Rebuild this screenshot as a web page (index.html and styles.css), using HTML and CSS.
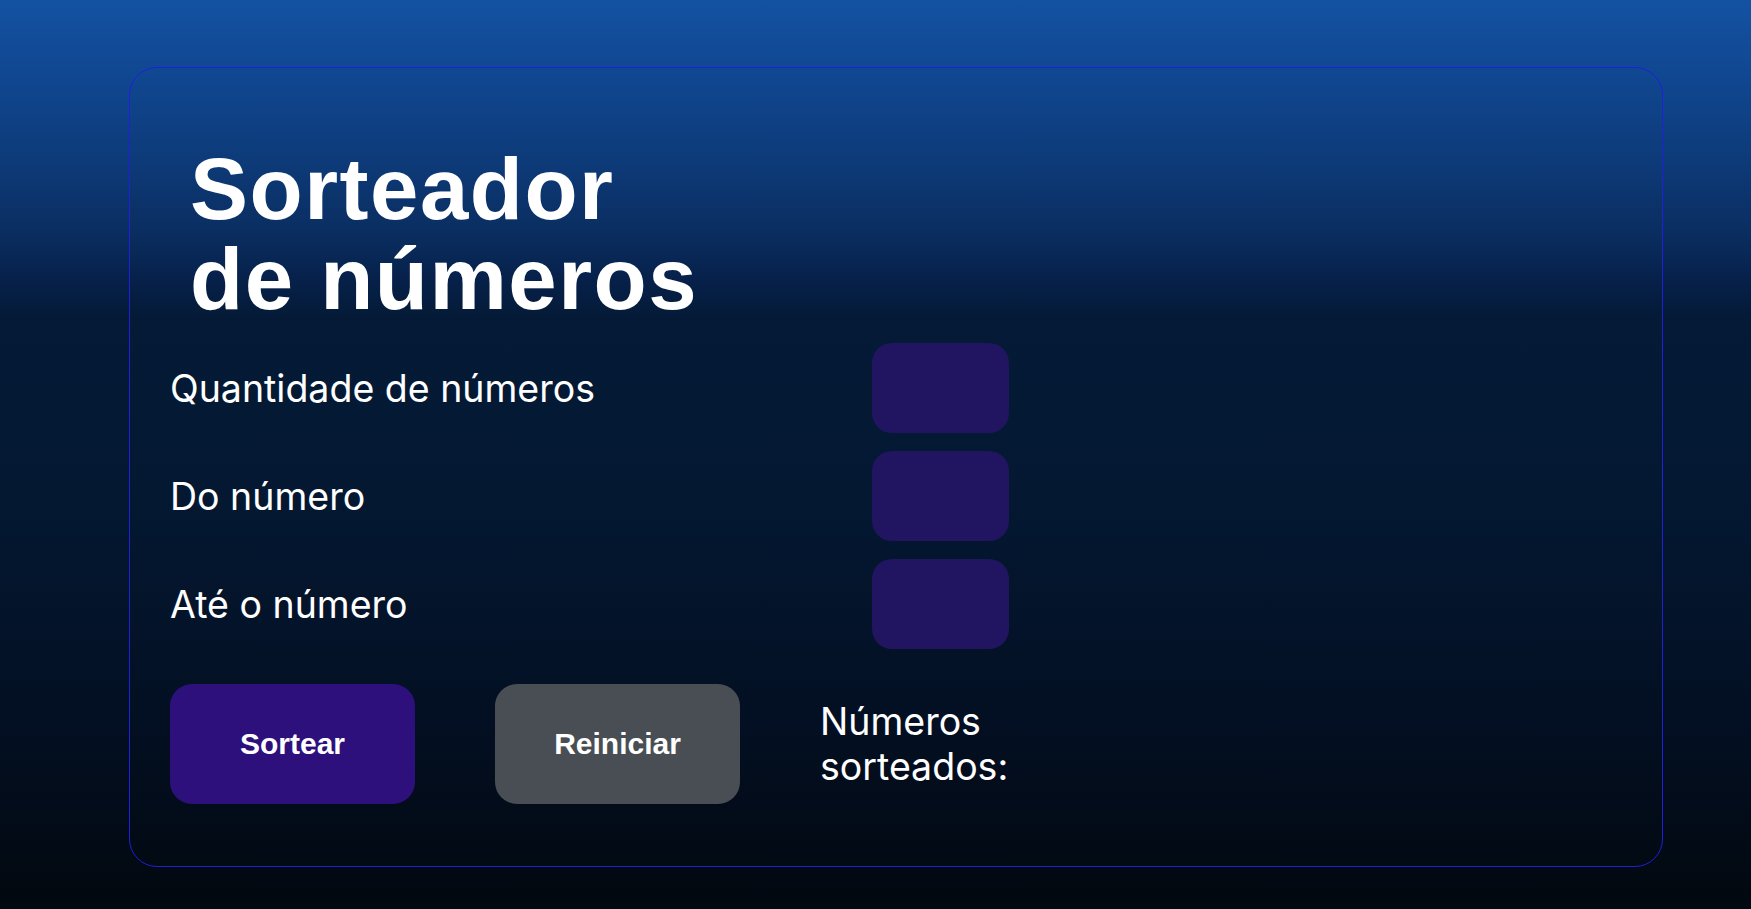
FILE: index.html
```html
<!DOCTYPE html>
<html lang="pt-BR">
<head>
<meta charset="utf-8">
<title>Sorteador de números</title>
<link rel="stylesheet" href="styles.css">
</head>
<body>
<main class="page">
  <section class="card">
    <h1 class="title">Sorteador<br>de números</h1>
    <form class="form">
      <div class="row">
        <label class="label" for="qtd">Quantidade de números</label>
        <input class="field" id="qtd" type="number">
      </div>
      <div class="row">
        <label class="label" for="de">Do número</label>
        <input class="field" id="de" type="number">
      </div>
      <div class="row">
        <label class="label" for="ate">Até o número</label>
        <input class="field" id="ate" type="number">
      </div>
      <div class="actions">
        <button type="button" class="btn btn-primary">Sortear</button>
        <button type="button" class="btn btn-secondary">Reiniciar</button>
        <p class="result">Números sorteados:</p>
      </div>
    </form>
  </section>
</main>
</body>
</html>
```

FILE: styles.css
```css
html {
  min-height: 100%;
  background: linear-gradient(to bottom,
    #1352a2 0%,
    #10468f 9%,
    #0d3a78 18%,
    #0a2d5f 26%,
    #062049 31%,
    #041a36 35%,
    #041832 55%,
    #030f22 80%,
    #02080f 100%);
}

body {
  margin: 0;
  min-height: 909px;
  font-family: "Inter", "Liberation Sans", sans-serif;
  color: #ffffff;
}

.page {
  padding: 67px 88px 42px 129px;
}

.card {
  box-sizing: border-box;
  width: 1534px;
  border: 1px solid #1f1fdc;
  border-radius: 28px;
  padding: 40px 40px 62px 40px;
}

.title {
  margin: 36px 0 19px 20px;
  font-family: "Liberation Sans", Arial, sans-serif;
  font-weight: 700;
  font-size: 87px;
  line-height: 90px;
  letter-spacing: 1.5px;
  color: #ffffff;
}

.form {
  width: 839px;
  display: flex;
  flex-direction: column;
  gap: 18px;
}

.row {
  height: 90px;
  display: flex;
  align-items: center;
  justify-content: space-between;
}

.label {
  font-family: "Inter", sans-serif;
  font-size: 37.5px;
  color: #ffffff;
}

.field {
  box-sizing: border-box;
  width: 137px;
  height: 90px;
  border: none;
  border-radius: 20px;
  background: #211561;
  color: #ffffff;
  font-family: "Inter", sans-serif;
  font-size: 32px;
  padding: 0 16px;
  outline: none;
  appearance: textfield;
  -moz-appearance: textfield;
}

.field::-webkit-outer-spin-button,
.field::-webkit-inner-spin-button {
  -webkit-appearance: none;
  margin: 0;
}

.actions {
  margin-top: 17px;
  display: flex;
  align-items: center;
  gap: 80px;
}

.btn {
  flex: 0 0 245px;
  height: 120px;
  border: none;
  border-radius: 22px;
  font-family: "Liberation Sans", Arial, sans-serif;
  font-weight: 700;
  font-size: 30px;
  color: #ffffff;
  cursor: pointer;
}

.btn-primary {
  background: #2d107c;
}

.btn-secondary {
  background: #494e55;
}

.result {
  flex: 1;
  margin: 0;
  font-family: "Inter", sans-serif;
  font-size: 37.5px;
  line-height: 45px;
  color: #ffffff;
}
```
